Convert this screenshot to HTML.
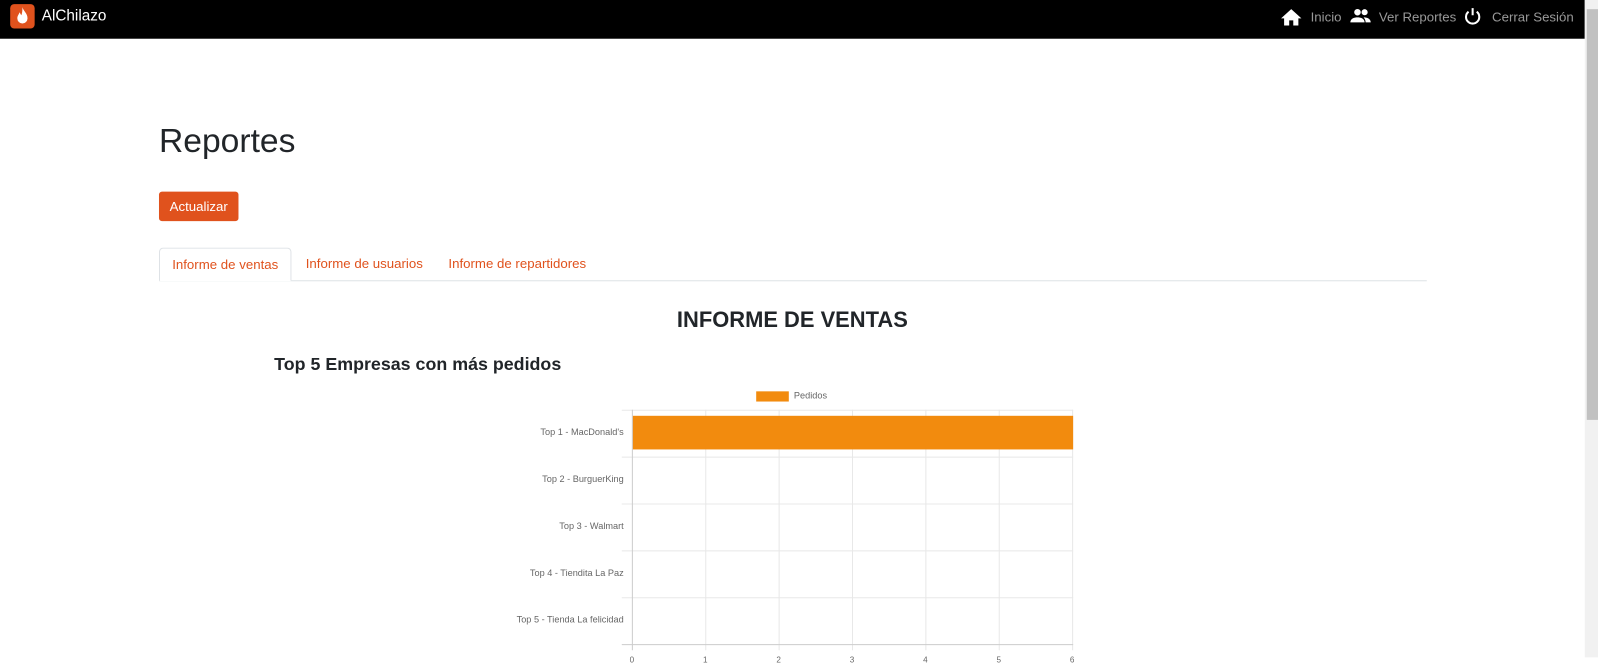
<!DOCTYPE html>
<html><head><meta charset="utf-8"><style>
*{margin:0;padding:0;box-sizing:border-box}
body{width:1598px;height:657px;overflow:hidden;background:#fff;font-family:"Liberation Sans",sans-serif;color:#212529}
#w{position:absolute;left:0;top:0;width:1568px;height:645px;transform:scale(1.01913);transform-origin:0 0}
.nav{position:absolute;left:0;top:0;width:1555px;height:38px;background:#000}
.abs{position:absolute}
.sb{position:absolute;left:1555px;top:0;width:13px;height:645px;background:#f1f1f1}
.thumb{position:absolute;left:1557px;top:9px;width:11px;height:403px;background:#c1c1c1}
.tab{position:absolute;top:243px;height:33px;font-size:13px;color:#e0521d;line-height:32px}
.lbl{position:absolute;font-size:9px;color:#666;text-align:right;right:0}
</style></head><body><div id="w">
<div class="nav"></div>
<div class="abs" style="left:10px;top:4px;width:24px;height:24px;background:#e0521d;border-radius:4px">
<svg width="24" height="24" viewBox="0 0 24 24"><path d="M12 3c1 4 5 6 5 11a5 5 0 0 1-10 0c0-3 2-4 2-6 1 1 1 2 2 3 1-3 1-5 1-8z" fill="#fff"/></svg></div>
<div class="abs" style="left:41px;top:7px;color:#fff;font-size:15px">AlChilazo</div>
<svg class="abs" style="left:1257px;top:8px" width="20" height="18" viewBox="0 0 20 18"><path d="M10 1L0 10h3v7h5v-5h4v5h5v-7h3z" fill="#fff"/></svg>
<div class="abs" style="left:1286px;top:9px;color:#999;font-size:13px">Inicio</div>
<svg class="abs" style="left:1324px;top:8px" width="22" height="16" viewBox="0 0 22 16"><circle cx="8" cy="4" r="3.2" fill="#fff"/><circle cx="15" cy="4" r="3" fill="#fff"/><path d="M1 14c0-4 4-5 7-5s7 1 7 5zM16 14c0-2-1-4-2-5 3 0 7 1 7 5z" fill="#fff"/></svg>
<div class="abs" style="left:1353px;top:9px;color:#999;font-size:13px">Ver Reportes</div>
<svg class="abs" style="left:1436px;top:7px" width="18" height="18" viewBox="0 0 18 18"><path d="M5 4.5a6.5 6.5 0 1 0 8 0" stroke="#fff" stroke-width="2" fill="none"/><path d="M9 1v7" stroke="#fff" stroke-width="2"/></svg>
<div class="abs" style="left:1464px;top:9px;color:#999;font-size:13px">Cerrar Sesión</div>
<div class="sb"></div><div class="thumb"></div>
<div class="abs" style="left:156px;top:119px;font-size:33px;font-weight:500">Reportes</div>
<div class="abs" style="left:156px;top:188px;width:78px;height:29px;background:#e0521d;border-radius:3px;color:#fff;font-size:13px;line-height:29px;text-align:center">Actualizar</div>
<div class="abs" style="left:156px;top:275px;width:1244px;height:1px;background:#dee2e6"></div>
<div class="tab" style="left:156px;width:130px;border:1px solid #dee2e6;border-bottom:1px solid #fff;border-radius:4px 4px 0 0;background:#fff;text-align:center">Informe de ventas</div>
<div class="tab" style="left:300px">Informe de usuarios</div>
<div class="tab" style="left:440px">Informe de repartidores</div>
<div class="abs" style="left:0;width:1555px;top:302px;text-align:center;font-size:21.5px;font-weight:600">INFORME DE VENTAS</div>
<div class="abs" style="left:269px;top:347px;font-size:17.5px;font-weight:600">Top 5 Empresas con más pedidos</div>
<div class="abs" style="left:742px;top:384px;width:32px;height:10px;background:#f28b0e"></div>
<div class="abs" style="left:779px;top:383px;font-size:9px;color:#666">Pedidos</div>
<svg class="abs" style="left:610px;top:398px" width="450" height="259">
<g stroke="#e8e8e8" stroke-width="1">
<line x1="82.5" y1="4" x2="82.5" y2="240"/><line x1="154.5" y1="4" x2="154.5" y2="240"/><line x1="226.5" y1="4" x2="226.5" y2="240"/><line x1="298.5" y1="4" x2="298.5" y2="240"/><line x1="370.5" y1="4" x2="370.5" y2="240"/><line x1="442.5" y1="4" x2="442.5" y2="240"/>
<line x1="0" y1="4.5" x2="443" y2="4.5"/><line x1="0" y1="50.5" x2="443" y2="50.5"/><line x1="0" y1="96.5" x2="443" y2="96.5"/><line x1="0" y1="142.5" x2="443" y2="142.5"/><line x1="0" y1="188.5" x2="443" y2="188.5"/>
</g>
<line x1="0" y1="234.5" x2="443" y2="234.5" stroke="#ccc"/>
<line x1="10.5" y1="4" x2="10.5" y2="240" stroke="#ccc"/>
<rect x="11" y="10" width="432" height="33" fill="#f28b0e"/>
<g font-size="8" fill="#666" font-family="Liberation Sans" text-anchor="middle"><text x="10" y="252">0</text><text x="82" y="252">1</text><text x="154" y="252">2</text><text x="226" y="252">3</text><text x="298" y="252">4</text><text x="370" y="252">5</text><text x="442" y="252">6</text></g>
</svg>
<div class="abs" style="left:440px;top:0;width:172px;height:645px">
<div class="lbl" style="top:419px">Top 1 - MacDonald's</div>
<div class="lbl" style="top:465px">Top 2 - BurguerKing</div>
<div class="lbl" style="top:511px">Top 3 - Walmart</div>
<div class="lbl" style="top:557px">Top 4 - Tiendita La Paz</div>
<div class="lbl" style="top:603px">Top 5 - Tienda La felicidad</div>
</div>
</div></body></html>
